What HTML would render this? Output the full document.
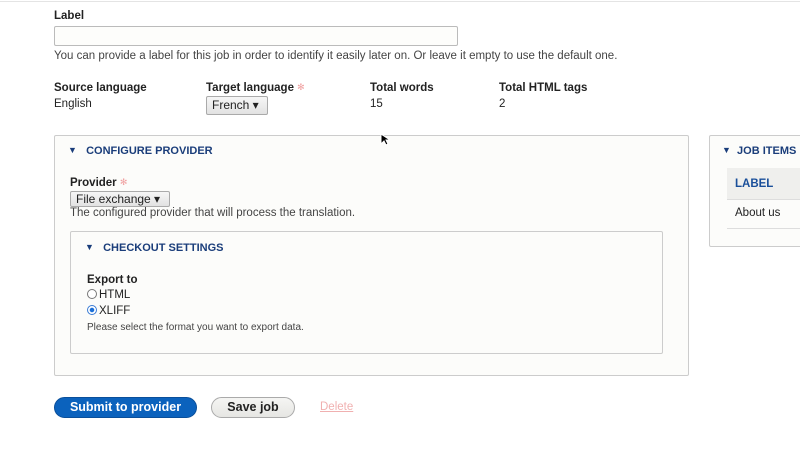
<!DOCTYPE html>
<html><head><style>
*{margin:0;padding:0;box-sizing:border-box}
body{width:800px;height:450px;background:#fff;font-family:"Liberation Sans",sans-serif;font-size:11.5px;color:#222;position:relative;overflow:hidden}
.a{position:absolute;white-space:nowrap}
b{font-weight:bold}
.panel{position:absolute;background:#fcfcfa;border:1px solid #ccc;border-radius:2px}
.t{color:#1a3d7a;font-weight:bold;font-size:11px}
.t i{font-style:normal;font-size:9px;vertical-align:1px}
.sel{position:absolute;white-space:nowrap;overflow:hidden;background:linear-gradient(#f6f6f6,#e2e2e2);border:1px solid #aaa;border-radius:2px;font-size:12px;padding:0 5px}
.star{color:#f0a0a0;font-size:9px;vertical-align:top}
.radio{display:inline-block;width:10px;height:10px;border:1px solid #777;border-radius:50%;vertical-align:-1px;margin-right:2px;background:#fff}
</style></head><body>
<div class="a" style="left:0;top:0;width:800px;height:2px;border-bottom:1px solid #e4e4e4"></div>
<div class="a" style="left:54px;top:10px"><b>Label</b></div>
<div class="a" style="left:54px;top:26px;width:404px;height:20px;border:1px solid #bbb;border-radius:2px;background:#fdfdfb"></div>
<div class="a" style="left:54px;top:50px;color:#444">You can provide a label for this job in order to identify it easily later on. Or leave it empty to use the default one.</div>
<div class="a" style="left:54px;top:82px"><b>Source language</b></div>
<div class="a" style="left:54px;top:98px">English</div>
<div class="a" style="left:206px;top:82px"><b>Target language</b> <span class="star">✻</span></div>
<div class="sel" style="left:206px;top:96px;width:62px;height:19px;line-height:17px">French ▾</div>
<div class="a" style="left:370px;top:82px"><b>Total words</b></div>
<div class="a" style="left:370px;top:98px">15</div>
<div class="a" style="left:499px;top:82px"><b>Total HTML tags</b></div>
<div class="a" style="left:499px;top:98px">2</div>

<div class="panel" style="left:54px;top:135px;width:635px;height:241px"></div>
<div class="a t" style="left:68px;top:145px"><i>▼</i>&nbsp;&nbsp; CONFIGURE PROVIDER</div>
<div class="a" style="left:70px;top:177px"><b>Provider</b> <span class="star">✻</span></div>
<div class="sel" style="left:70px;top:191px;width:100px;height:16px;line-height:14px">File exchange ▾</div>
<div class="a" style="left:70px;top:207px;color:#444">The configured provider that will process the translation.</div>
<div class="panel" style="left:70px;top:231px;width:593px;height:123px"></div>
<div class="a t" style="left:85px;top:242px"><i>▼</i>&nbsp;&nbsp; CHECKOUT SETTINGS</div>
<div class="a" style="left:87px;top:274px"><b>Export to</b></div>
<div class="a" style="left:87px;top:289px"><span class="radio"></span>HTML</div>
<div class="a" style="left:87px;top:305px"><span class="radio" style="border-color:#3a7bd5;background:radial-gradient(#1a6fd8 35%,#fff 45%)"></span>XLIFF</div>
<div class="a" style="left:87px;top:322px;font-size:10px;color:#444">Please select the format you want to export data.</div>

<div class="panel" style="left:709px;top:135px;width:100px;height:112px"></div>
<div class="a t" style="left:722px;top:145px"><i>▼</i>&nbsp;&nbsp;JOB ITEMS</div>
<div class="a" style="left:727px;top:168px;width:80px;height:32px;background:#efefed;border-bottom:1px solid #ddd"></div>
<div class="a" style="left:735px;top:178px;color:#1a4f9a;font-weight:bold">LABEL</div>
<div class="a" style="left:735px;top:207px">About us</div>
<div class="a" style="left:727px;top:228px;width:80px;border-top:1px solid #ddd"></div>

<div class="a" style="left:54px;top:397px;width:143px;height:21px;background:#0b62bd;border:1px solid #0a4f9a;border-radius:11px;color:#fff;font-weight:bold;font-size:12.5px;text-align:center;line-height:19px">Submit to provider</div>
<div class="a" style="left:211px;top:397px;width:84px;height:21px;background:linear-gradient(#f5f5f3,#e6e6e3);border:1px solid #aaa;border-radius:11px;font-weight:bold;font-size:12.5px;text-align:center;line-height:19px">Save job</div>
<div class="a" style="left:320px;top:401px;color:#f0b0b0;text-decoration:underline">Delete</div>
<svg class="a" style="left:380px;top:133px" width="10" height="14" viewBox="0 0 10 14"><path d="M1 1v10l3-3 2 4 2-1-2-4h4z" fill="#000" stroke="#fff" stroke-width="1"/></svg>
</body></html>
